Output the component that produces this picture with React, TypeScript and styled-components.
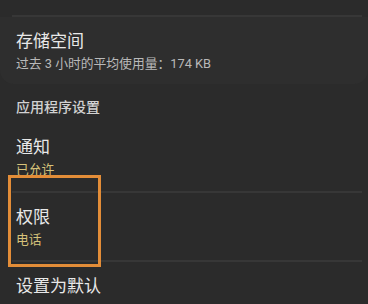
import React from 'react'
import styled, { createGlobalStyle } from 'styled-components'

const GlobalStyle = createGlobalStyle`
  html, body {
    margin: 0;
    padding: 0;
    background: #2b2b2b;
  }
  body {
    font-family: Roboto, "Noto Sans CJK SC", "Noto Sans", sans-serif;
    -webkit-font-smoothing: antialiased;
  }
`

const Screen = styled.div`
  width: 368px;
  height: 304px;
  overflow: hidden;
  background: #2b2b2b;
  display: flex;
  flex-direction: column;
`

const Item = styled.div<{ $pressed?: boolean; $extra?: number }>`
  position: relative;
  display: flex;
  flex-direction: column;
  padding: 12px 16px ${p => 11 + (p.$extra || 0)}px;
  background: ${p => (p.$pressed ? '#2e2e2e' : 'transparent')};
  border-radius: ${p => (p.$pressed ? '0 0 14px 14px' : '0')};
  flex-shrink: 0;
`

/* previous row, scrolled mostly out of view */
const ClippedTop = styled.div`
  height: 15px;
  padding: 0 16px;
  flex-shrink: 0;
  overflow: hidden;
  & > div {
    margin-top: -15px;
  }
`

const Title = styled.div`
  font-size: 17px;
  line-height: 24px;
  color: #e8e8e8;
  white-space: nowrap;
`

const Summary = styled.div<{ $accent?: boolean; $gap?: number }>`
  margin-top: ${p => p.$gap ?? 2}px;
  font-size: 12.8px;
  line-height: 18px;
  color: ${p => (p.$accent ? '#d6c27a' : '#b9b9b9')};
  white-space: nowrap;
`

const Divider = styled.div`
  height: 2px;
  margin: 0 6px 0 12px;
  background: #373737;
  flex-shrink: 0;
`

const SectionHeader = styled.div`
  padding: 14px 16px 7px;
  font-size: 14px;
  line-height: 18px;
  font-weight: 500;
  color: #d2d2d2;
  flex-shrink: 0;
`

const Highlight = styled.div`
  position: absolute;
  left: 8px;
  top: -18px;
  width: 93px;
  height: 92px;
  box-sizing: border-box;
  border: 3px solid #e38d38;
  pointer-events: none;
`

export default function App() {
  return (
    <>
      <GlobalStyle />
      <Screen>
        <ClippedTop>
          <Summary>过去 3 小时内未使用移动数据流量</Summary>
        </ClippedTop>
        <Divider />
        <Item $pressed>
          <Title>存储空间</Title>
          <Summary>过去 3 小时的平均使用量：174 KB</Summary>
        </Item>
        <SectionHeader>应用程序设置</SectionHeader>
        <Item $extra={1}>
          <Title>通知</Title>
          <Summary $accent>已允许</Summary>
        </Item>
        <Divider />
        <Item>
          <Highlight />
          <Title>权限</Title>
          <Summary $accent>电话</Summary>
        </Item>
        <Divider />
        <Item>
          <Title>设置为默认</Title>
          <Summary $gap={6}>默认情况下不打开任何链接</Summary>
        </Item>
      </Screen>
    </>
  )
}
